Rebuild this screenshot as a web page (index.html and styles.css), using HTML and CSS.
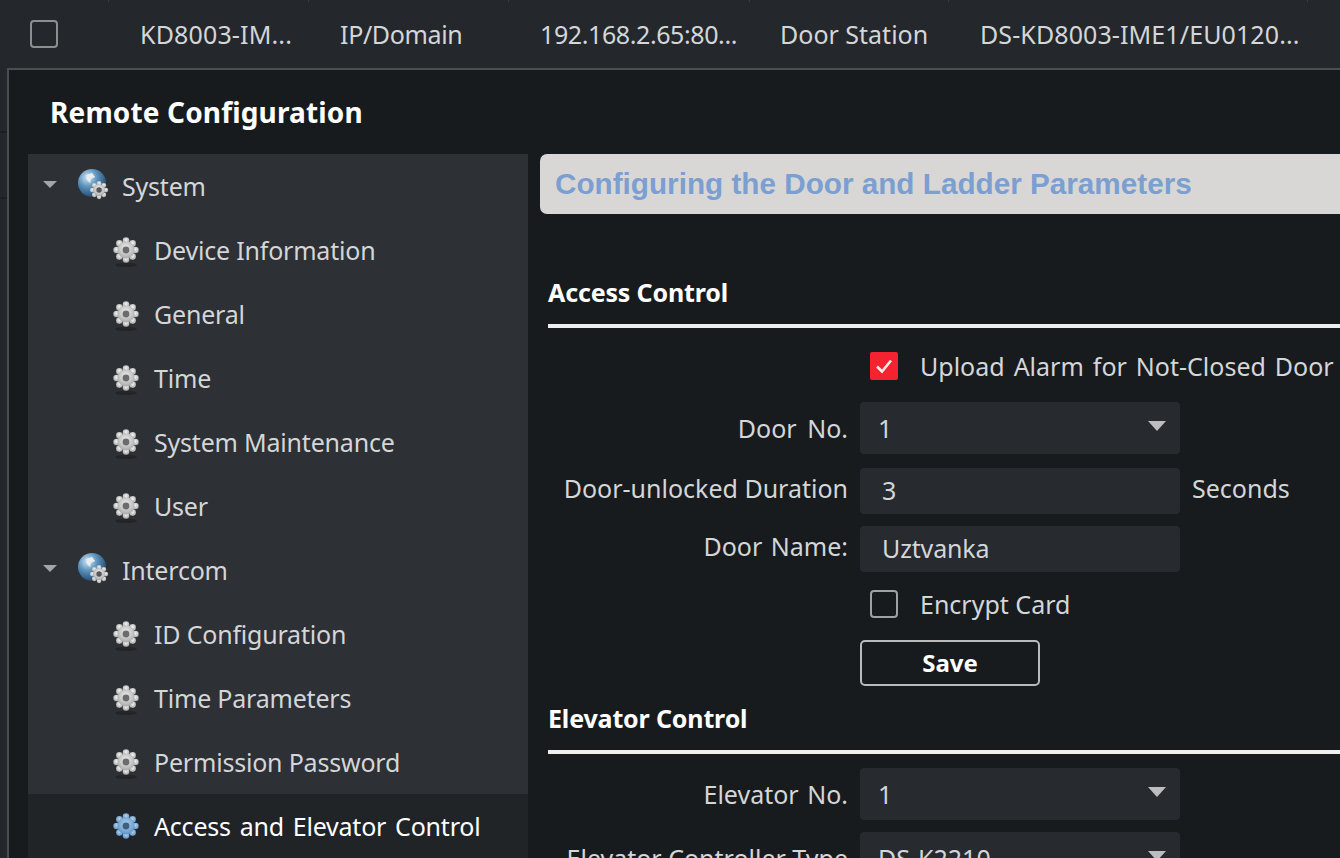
FILE: index.html
```html
<!DOCTYPE html>
<html lang="en">
<head>
<meta charset="utf-8">
<title>Remote Configuration</title>
<link rel="stylesheet" href="styles.css">
</head>
<body>
<svg class="defs" width="0" height="0" aria-hidden="true">
  <defs>
    <radialGradient id="gw" cx="50%" cy="40%" r="60%"><stop offset="0" stop-color="#f4f4f4"/><stop offset="1" stop-color="#a9a9a9"/></radialGradient>
    <radialGradient id="gb" cx="50%" cy="40%" r="60%"><stop offset="0" stop-color="#b5d2ee"/><stop offset="1" stop-color="#5f94c6"/></radialGradient>
    <radialGradient id="globe" cx="35%" cy="30%" r="75%"><stop offset="0" stop-color="#d6e6f2"/><stop offset=".45" stop-color="#5b93bd"/><stop offset="1" stop-color="#1d4668"/></radialGradient>
    <g id="teeth">
      <circle cx="14" cy="4.6" r="3.3"/><circle cx="14" cy="23.4" r="3.3"/><circle cx="4.6" cy="14" r="3.3"/><circle cx="23.4" cy="14" r="3.3"/>
      <circle cx="7.4" cy="7.4" r="3.3"/><circle cx="20.6" cy="7.4" r="3.3"/><circle cx="7.4" cy="20.6" r="3.3"/><circle cx="20.6" cy="20.6" r="3.3"/>
      <circle cx="14" cy="14" r="8.5"/>
    </g>
    <symbol id="gear" viewBox="0 0 28 32">
      <ellipse cx="14" cy="29" rx="11" ry="2" fill="#222428"/>
      <use href="#teeth" fill="url(#gw)"/><circle cx="14" cy="14" r="3.4" fill="#6a6c70"/>
    </symbol>
    <symbol id="gear-on" viewBox="0 0 28 32">
      <use href="#teeth" fill="url(#gb)"/><circle cx="14" cy="14" r="3.4" fill="#3d5f80"/>
    </symbol>
    <symbol id="globe-gear" viewBox="0 0 32 32">
      <circle cx="14" cy="14" r="14" fill="url(#globe)"/>
      <path d="M8 6l6-2 3 4-4 2-1 4-3-3z" fill="#e6eef4"/>
      <g transform="translate(11 11) scale(.72)"><use href="#teeth" fill="url(#gw)"/><circle cx="14" cy="14" r="3.8" fill="#55575b"/></g>
    </symbol>
  </defs>
</svg>

<div class="page">
  <div class="table-row">
    <span class="box"></span>
    <span class="cell c1">KD8003-IM...</span>
    <span class="cell c2">IP/Domain</span>
    <span class="cell c3">192.168.2.65:80...</span>
    <span class="cell c4">Door Station</span>
    <span class="cell c5">DS-KD8003-IME1/EU0120...</span>
  </div>

  <div class="under">
    <div class="edge">
      <i class="edge-line"></i>
      <i class="edge-line"></i>
    </div>
    <section class="dialog">
      <h1 class="dialog-title">Remote Configuration</h1>
      <div class="dialog-body">
        <nav class="tree">
          <div class="node"><span class="caret"></span><svg class="ico-globe"><use href="#globe-gear"/></svg><span>System</span></div>
          <div class="leaf"><svg class="ico"><use href="#gear"/></svg><span>Device Information</span></div>
          <div class="leaf"><svg class="ico"><use href="#gear"/></svg><span>General</span></div>
          <div class="leaf"><svg class="ico"><use href="#gear"/></svg><span>Time</span></div>
          <div class="leaf"><svg class="ico"><use href="#gear"/></svg><span>System Maintenance</span></div>
          <div class="leaf"><svg class="ico"><use href="#gear"/></svg><span>User</span></div>
          <div class="node"><span class="caret"></span><svg class="ico-globe"><use href="#globe-gear"/></svg><span>Intercom</span></div>
          <div class="leaf"><svg class="ico"><use href="#gear"/></svg><span>ID Configuration</span></div>
          <div class="leaf"><svg class="ico"><use href="#gear"/></svg><span>Time Parameters</span></div>
          <div class="leaf"><svg class="ico"><use href="#gear"/></svg><span>Permission Password</span></div>
          <div class="leaf active"><svg class="ico"><use href="#gear-on"/></svg><span>Access and Elevator Control</span></div>
        </nav>

        <main class="content">
          <div class="banner">Configuring the Door and Ladder Parameters</div>

          <h2 class="section first">Access Control</h2>
          <div class="rule"></div>
          <div class="row check-row r-alarm"><span class="check on"><svg viewBox="0 0 28 28" width="28" height="28"><path d="M7 14.5l5 5 9-11" fill="none" stroke="#fbeaea" stroke-width="2.6"/></svg></span><span>Upload Alarm for Not-Closed Door</span></div>
          <div class="row r-door"><label class="lbl">Door No.</label><div class="ctl select"><span>1</span><i class="arrow"></i></div></div>
          <div class="row r-dur"><label class="lbl">Door-unlocked Duration</label><div class="ctl input">3</div><span class="unit">Seconds</span></div>
          <div class="row r-name"><label class="lbl">Door Name:</label><div class="ctl input">Uztvanka</div></div>
          <div class="row check-row r-enc"><span class="check"></span><span>Encrypt Card</span></div>
          <div class="row r-save"><button class="save" type="button">Save</button></div>

          <h2 class="section second">Elevator Control</h2>
          <div class="rule"></div>
          <div class="row r-elev"><label class="lbl">Elevator No.</label><div class="ctl select"><span>1</span><i class="arrow"></i></div></div>
          <div class="row r-type"><label class="lbl">Elevator Controller Type</label><div class="ctl select"><span>DS-K2210</span><i class="arrow"></i></div></div>
        </main>
      </div>
    </section>
  </div>
</div>
</body>
</html>
```

FILE: styles.css
```css
* { box-sizing: border-box; }
html, body { margin: 0; height: 100%; overflow: hidden; background: #24282c; }
body { font-family: "Noto Sans", "Open Sans", sans-serif; font-size: 25px; color: #d4d6d8; }
.defs { position: absolute; }

.page { width: 1340px; height: 858px; display: flex; flex-direction: column; overflow: hidden; }

.table-row {
  flex: 0 0 68px; display: flex; align-items: center; padding-left: 30px; white-space: nowrap;
  background-color: #24282c;
  background-image:
    linear-gradient(#3a3d41, #3a3d41), linear-gradient(#3a3d41, #3a3d41), linear-gradient(#3a3d41, #3a3d41),
    linear-gradient(#3a3d41, #3a3d41), linear-gradient(#3a3d41, #3a3d41), linear-gradient(#3a3d41, #3a3d41);
  background-size: 1px 2px;
  background-repeat: no-repeat;
  background-position: 108px 0, 308px 0, 508px 0, 749px 0, 948px 0, 1307px 0;
}
.box { flex: 0 0 28px; height: 28px; border: 2px solid #8d8e90; border-radius: 4px; }
.cell { display: block; }
.c1 { margin-left: 82px; width: 200px; letter-spacing: 0.15px; }
.c2 { width: 200px; letter-spacing: -0.35px; }
.c3 { width: 240px; letter-spacing: -0.4px; }
.c4 { width: 200px; }
.c5 { width: 340px; letter-spacing: 0.1px; }

.under { flex: 1; display: flex; min-height: 0; }
.edge { flex: 0 0 7px; background: #24282c; display: flex; flex-direction: column; padding-top: 63px; gap: 64px; }
.edge-line { display: block; height: 2px; background: #1c1f23; }

.dialog { flex: 1; min-width: 0; display: flex; flex-direction: column; background: #181b1e; border-left: 2px solid #4b4d50; border-top: 2px solid #4b4d50; }
.dialog-title { flex: 0 0 84px; margin: 0; padding: 22px 0 0 41px; font-size: 28px; line-height: 40px; font-weight: 700; letter-spacing: 0.15px; color: #fff; }

.dialog-body { flex: 1; display: flex; min-height: 0; padding-left: 19px; }

.tree { flex: 0 0 500px; background: #2d3035; letter-spacing: -0.2px; }
.node, .leaf { height: 64px; display: flex; align-items: center; white-space: nowrap; }
.node { padding-left: 15px; }
.leaf { padding-left: 84px; }
.leaf.active { background: #212427; color: #fff; word-spacing: 2.5px; }
.caret { width: 0; height: 0; border-left: 7px solid transparent; border-right: 7px solid transparent; border-top: 7px solid #a4a5a7; margin-right: 21px; margin-top: -4px; }
.ico-globe { width: 32px; height: 32px; margin-right: 12px; margin-top: -2px; filter: blur(0.4px); }
.ico { width: 28px; height: 32px; margin-right: 14px; margin-top: 3px; filter: blur(0.4px); }

.content { flex: 1; min-width: 0; padding-left: 12px; }
.banner { width: 820px; height: 60px; padding-left: 15px; line-height: 60px; background: #d8d7d5; border-radius: 7px 0 0 7px; font-family: "Liberation Sans", Arial, sans-serif; font-weight: 700; font-size: 29.7px; color: #7b9fd0; white-space: nowrap; }

.section { margin: 0 0 0 8px; font-size: 25px; line-height: 34px; font-weight: 700; letter-spacing: -0.15px; color: #fff; white-space: nowrap; }
.section.first { margin-top: 61px; }
.section.second { margin-top: 15px; }
.rule { margin: 15px 0 0 8px; height: 4px; background: #eeeeee; width: 800px; }

.row { display: flex; align-items: center; white-space: nowrap; }
.lbl { flex: 0 0 308px; text-align: right; margin-right: 12px; word-spacing: 2px; }
.ctl { flex: 0 0 320px; background: #272a2f; border-radius: 4px; display: flex; align-items: center; }
.select { height: 52px; padding: 0 14px 0 18px; justify-content: space-between; }
.input { height: 46px; padding: 0 0 2px 22px; letter-spacing: -0.15px; }
.arrow { width: 0; height: 0; border-left: 9px solid transparent; border-right: 9px solid transparent; border-top: 10px solid #bcbdbe; margin-top: -5px; }
.unit { margin: 0 0 6px 12px; }
.r-door .lbl { word-spacing: 4px; }
.r-dur .lbl { word-spacing: 0; margin-bottom: 6px; }
.r-name .lbl { margin-bottom: 6px; }
.r-type .lbl { word-spacing: 0; }

.check-row { padding-left: 330px; gap: 22px; }
.check { flex: 0 0 28px; height: 28px; border: 2px solid #a0a1a3; border-radius: 4px; }
.check.on { background: #f5222f; border: 0; border-radius: 2px; }
.check.on svg { display: block; }
.r-alarm { word-spacing: 2.5px; }

.r-alarm { margin-top: 24px; height: 28px; }
.r-door { margin-top: 22px; }
.r-dur { margin-top: 14px; }
.r-name { margin-top: 12px; }
.r-enc { margin-top: 18px; height: 28px; }
.r-save { margin-top: 22px; padding-left: 320px; }
.r-elev { margin-top: 14px; }
.r-type { margin-top: 12px; }

.save { width: 180px; height: 46px; padding: 0 0 2px; background: #181b1e; border: 2px solid #b9babb; border-radius: 5px; font-family: inherit; font-size: 24px; font-weight: 700; color: #fff; }
```
